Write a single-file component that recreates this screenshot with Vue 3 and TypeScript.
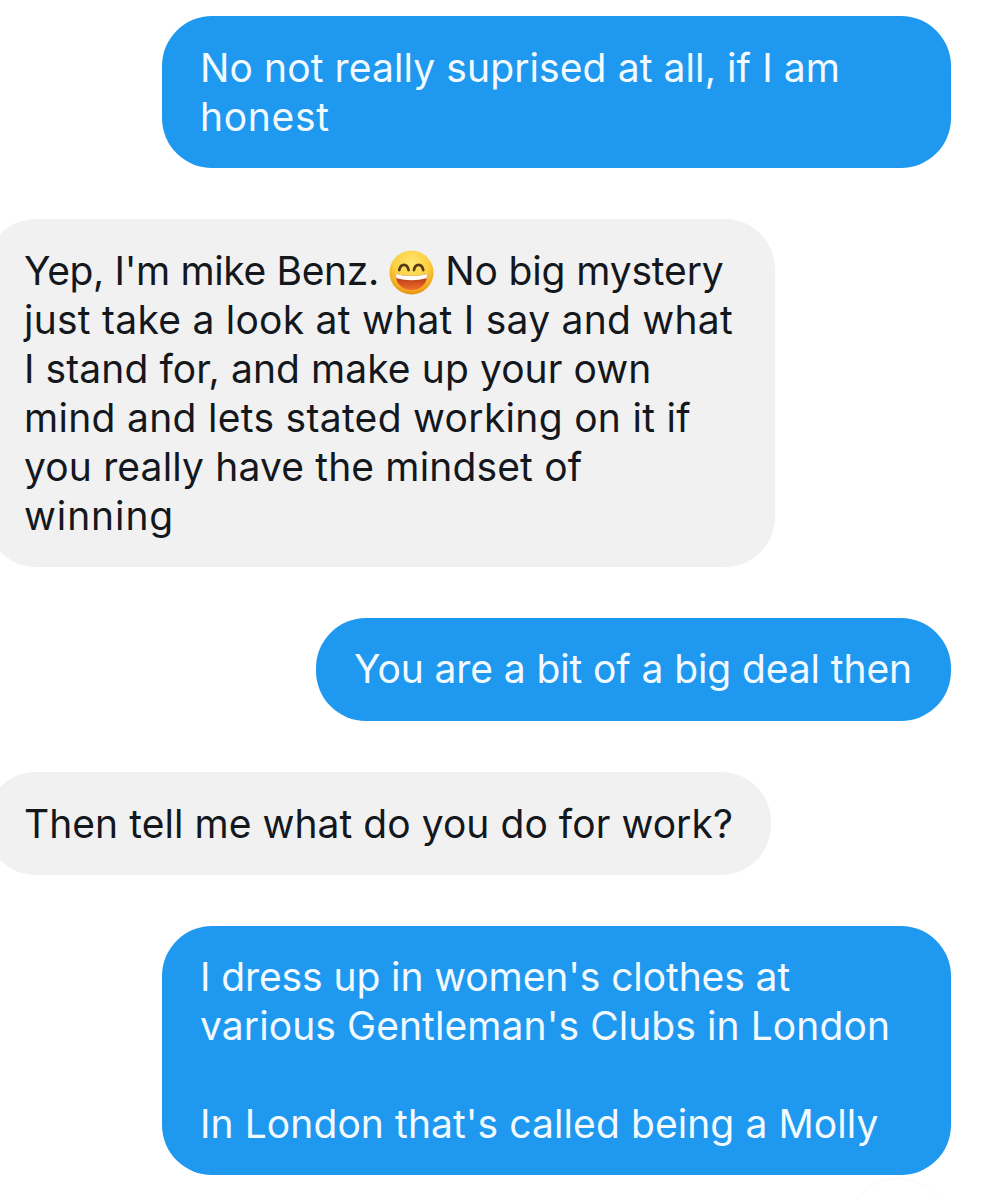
<script setup lang="ts">
interface Line {
  text: string
  track: number[]
}

interface Message {
  side: 'me' | 'them'
  lines: Line[]
}

const messages: Message[] = [
  {
    side: 'me',
    lines: [
      { text: 'No not really suprised at all, if I am', track: [0.1] },
      { text: 'honest', track: [0.7] },
    ],
  },
  {
    side: 'them',
    lines: [
      { text: "Yep, I'm mike Benz. :) No big mystery", track: [-0.35, -0.15] },
      { text: 'just take a look at what I say and what', track: [0.25] },
      { text: 'I stand for, and make up your own', track: [0.08] },
      { text: 'mind and lets stated working on it if', track: [0.3] },
      { text: 'you really have the mindset of', track: [0.15] },
      { text: 'winning', track: [0.9] },
    ],
  },
  {
    side: 'me',
    lines: [{ text: 'You are a bit of a big deal then', track: [-0.1] }],
  },
  {
    side: 'them',
    lines: [{ text: 'Then tell me what do you do for work?', track: [0.05] }],
  },
  {
    side: 'me',
    lines: [
      { text: "I dress up in women's clothes at", track: [-0.1] },
      { text: "various Gentleman's Clubs in London", track: [0.08] },
      { text: '', track: [0] },
      { text: "In London that's called being a Molly", track: [0.08] },
    ],
  },
]

const sizes = [789, 789, 635, 785, 789]

function parts(line: string) {
  return line.split(':)')
}
</script>

<template>
  <div class="chat">
    <div
      v-for="(msg, i) in messages"
      :key="i"
      class="row"
      :class="msg.side"
    >
      <div class="bubble" :class="msg.side" :style="{ width: sizes[i] + 'px' }">
        <div v-for="(line, j) in msg.lines" :key="j" class="line">
          <template v-if="line.text === ''">&nbsp;</template>
          <template v-else v-for="(part, k) in parts(line.text)" :key="k">
            <svg v-if="k > 0" class="emoji" viewBox="0 0 46 46" aria-hidden="true">
              <defs>
                <radialGradient id="face" cx="50%" cy="30%" r="72%">
                  <stop offset="0%" stop-color="#fee873" />
                  <stop offset="55%" stop-color="#fbcf3f" />
                  <stop offset="85%" stop-color="#f2a71f" />
                  <stop offset="100%" stop-color="#dd8a10" />
                </radialGradient>
                <linearGradient id="mouth" x1="0" y1="0" x2="0" y2="1">
                  <stop offset="0%" stop-color="#a92a12" />
                  <stop offset="100%" stop-color="#f0702c" />
                </linearGradient>
              </defs>
              <circle cx="23" cy="23" r="22.5" fill="url(#face)" />
              <path d="M10.500 20.500c1.500-7 8-7 9.500 0M25.500 20.500c1.500-7 8-7 9.500 0" fill="none" stroke="#5a3a14" stroke-width="2.800" stroke-linecap="round" />
              <path d="M7 24.500c10 2.500 22 2.500 32 0 .6 9.500-6.500 16.500-16 16.500S6.400 34 7 24.500z" fill="url(#mouth)" />
              <path d="M7 24.500c10 2.500 22 2.500 32 0l-.5 4.500c-10 2.500-21 2.500-31 0z" fill="#fffdf8" />
            </svg><span :style="{ letterSpacing: line.track[k] + 'px' }">{{ part }}</span>
          </template>
        </div>
      </div>
    </div>
    <div class="ghost"></div>
  </div>
</template>

<style>
html,
body {
  background: #fff;
}
</style>

<style scoped>
.chat {
  position: relative;
  display: flex;
  flex-direction: column;
  gap: 51px;
  width: 995px;
  height: 1200px;
  padding-top: 16px;
  box-sizing: border-box;
  overflow: hidden;
  font-family: Inter, "Liberation Sans", sans-serif;
  font-size: 39px;
  line-height: 49px;
}

.row {
  display: flex;
}

.row.me {
  justify-content: flex-end;
  padding-right: 44px;
}

.row.them {
  justify-content: flex-start;
  margin-left: -14px;
}

.bubble {
  box-sizing: border-box;
  padding: 27px 38px;
  border-radius: 50px;
  white-space: pre;
}

.bubble.me {
  background: #1f99f0;
  color: #f2faff;
  padding-top: 26px;
  padding-bottom: 28px;
}

.row:first-child .bubble.me {
  padding-top: 27px;
  padding-bottom: 27px;
}

.row:nth-last-child(2) .bubble.me {
  padding-bottom: 27px;
}

.bubble.them {
  background: #f1f1f2;
  color: #14181d;
}

.line {
  height: 49px;
}

.emoji {
  display: inline-block;
  width: 45px;
  height: 45px;
  vertical-align: -10px;
}

.ghost {
  position: absolute;
  left: 845px;
  top: 1178px;
  width: 104px;
  height: 104px;
  border: 1px solid #f9f9f9;
  border-radius: 50%;
}
</style>
